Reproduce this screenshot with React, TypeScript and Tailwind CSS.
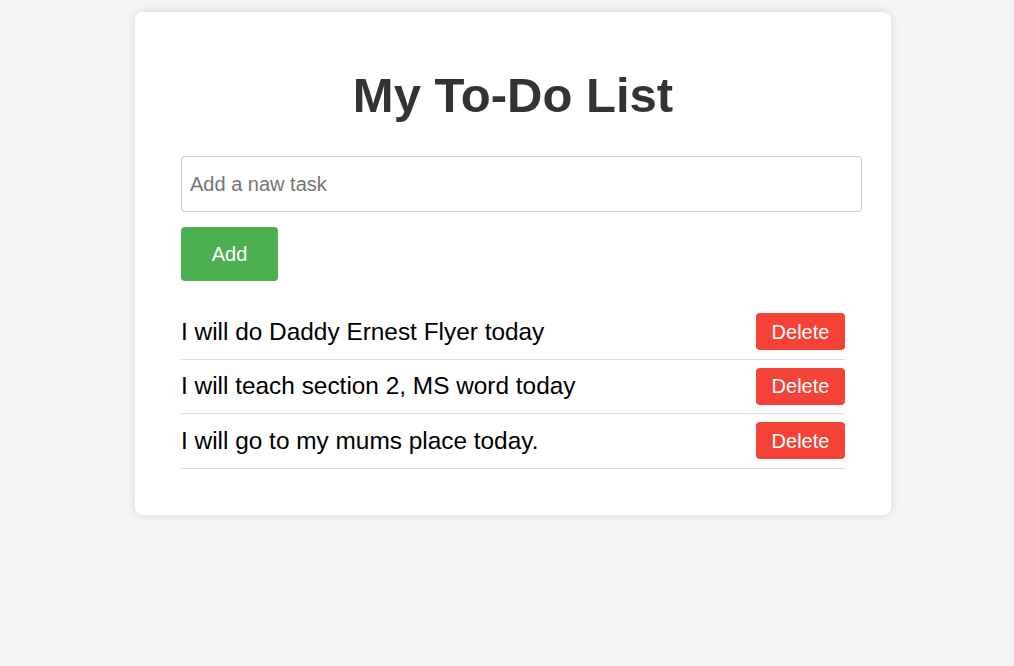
import { useState } from "react";

type Task = {
  id: number;
  text: string;
};

const initialTasks: Task[] = [
  { id: 1, text: "I will do Daddy Ernest Flyer today" },
  { id: 2, text: "I will teach section 2, MS word today" },
  { id: 3, text: "I will go to my mums place today." },
];

export default function App() {
  const [tasks, setTasks] = useState<Task[]>(initialTasks);
  const [draft, setDraft] = useState("");

  const addTask = () => {
    const text = draft.trim();
    if (!text) return;
    setTasks((prev) => [...prev, { id: Date.now(), text }]);
    setDraft("");
  };

  return (
    <div className="min-h-[666px] bg-[#f4f4f4] pt-[12px] pb-[20px] font-['Liberation_Sans',Arial,sans-serif]">
      <div className="ml-[135px] w-[756px] rounded-[8px] bg-white px-[46px] pt-[56px] pb-[46px] shadow-[0_0_10px_rgba(0,0,0,0.12)]">
        <h1 className="mb-[33px] text-center text-[49px] leading-[55px] font-bold text-[#333]">
          My To-Do List
        </h1>

        <input
          type="text"
          value={draft}
          onChange={(e) => setDraft(e.target.value)}
          placeholder="Add a naw task"
          className="block h-[56px] w-[681px] rounded-[4px] border border-[#ccc] px-[8px] text-[20px] text-black outline-none placeholder:text-[#757575]"
        />

        <button
          onClick={addTask}
          className="mt-[15px] block h-[54px] w-[97px] rounded-[4px] bg-[#4caf50] text-[20px] text-white"
        >
          Add
        </button>

        <ul className="mt-[24px] w-[664px]">
          {tasks.map((task) => (
            <li
              key={task.id}
              className="flex items-center justify-between border-b border-[#ddd] pt-[8px] pb-[8.5px]"
            >
              <span className="text-[24.4px] leading-[28px] text-black">{task.text}</span>
              <button
                onClick={() => setTasks((prev) => prev.filter((t) => t.id !== task.id))}
                className="h-[37px] w-[89px] rounded-[4px] bg-[#f44336] text-[20px] text-white"
              >
                Delete
              </button>
            </li>
          ))}
        </ul>
      </div>
    </div>
  );
}
